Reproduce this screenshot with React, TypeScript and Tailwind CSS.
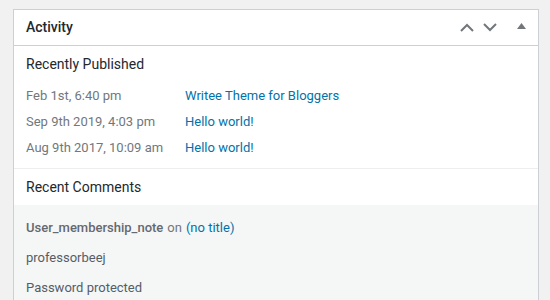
import React from 'react'

const published = [
  { date: 'Feb 1st, 6:40 pm', title: 'Writee Theme for Bloggers' },
  { date: 'Sep 9th 2019, 4:03 pm', title: 'Hello world!' },
  { date: 'Aug 9th 2017, 10:09 am', title: 'Hello world!' },
]

function Chevron({ up }: { up?: boolean }) {
  return (
    <svg width="14" height="9" viewBox="0 0 14 9" className="block">
      <path
        d={up ? 'M1 8 L7 2 L13 8' : 'M1 1 L7 7 L13 1'}
        fill="none"
        stroke="#72777c"
        strokeWidth="2"
      />
    </svg>
  )
}

export default function App() {
  return (
    <div
      className="w-[550px] h-[300px] overflow-hidden bg-[#f1f1f1] pt-[9px] pl-[13px]"
      style={{ fontFamily: 'Roboto, "Noto Sans", sans-serif' }}
    >
      <div className="w-[526px] h-[320px] bg-white border border-[#ccd0d4]">
        {/* Header */}
        <div className="h-[36px] border-b border-[#ccd0d4] flex items-center pl-[12px] pr-[12px]">
          <h2 className="text-[14px] font-medium text-[#23282d] flex-1">Activity</h2>
          <div className="flex items-center gap-[9px]">
            <Chevron up />
            <Chevron />
            <svg width="9" height="6" viewBox="0 0 9 6" className="block ml-[11px] mb-[3px]">
              <path d="M0 6 L4.5 0 L9 6 Z" fill="#72777c" />
            </svg>
          </div>
        </div>

        {/* Recently Published */}
        <div className="px-[12px] pt-[9px] pb-[7px] border-b border-[#eeeeee]">
          <h3 className="text-[14px] leading-[18px] text-[#23282d] mb-[10px]">Recently Published</h3>
          {published.map((p, i) => (
            <div key={i} className="h-[26px] flex items-center text-[13px]">
              <span className="w-[159px] text-[#72777c]">{p.date}</span>
              <a className="text-[#0073aa]">{p.title}</a>
            </div>
          ))}
        </div>

        {/* Recent Comments */}
        <div className="h-[36px] flex items-center px-[12px]">
          <h3 className="text-[14px] text-[#23282d]">Recent Comments</h3>
        </div>
        <div className="bg-[#f5f6f6] px-[12px] pt-[8px] text-[13px] text-[#555d66]">
          <div className="h-[30px] flex items-center">
            <span className="font-medium text-[#646970]">User_membership_note</span>
            <span className="ml-[4px] text-[#72777c]">on</span>
            <a className="ml-[4px] text-[#0073aa]">(no title)</a>
          </div>
          <div className="h-[30px] flex items-center text-[#555d66]">professorbeej</div>
          <div className="h-[30px] flex items-center text-[#555d66]">Password protected</div>
        </div>
      </div>
    </div>
  )
}
